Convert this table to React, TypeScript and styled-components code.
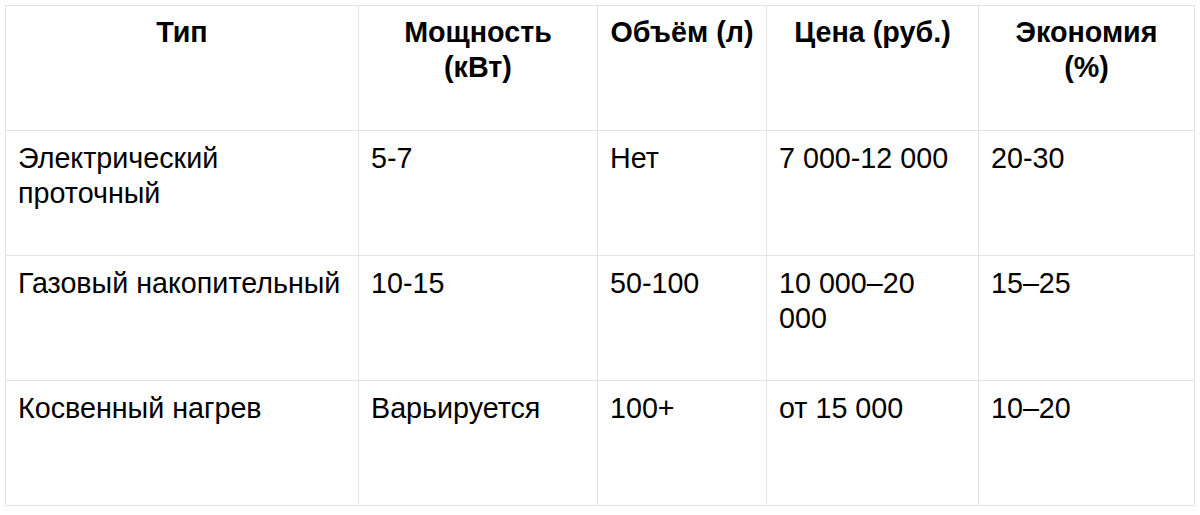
import React from 'react';
import styled, { createGlobalStyle } from 'styled-components';

const GlobalStyle = createGlobalStyle`
  body {
    margin: 0;
    background: #ffffff;
    font-family: "Liberation Sans", Arial, sans-serif;
    color: #000000;
  }
`;

const Page = styled.div`
  padding: 5px;
`;

const Table = styled.table`
  width: 1189px;
  border-collapse: collapse;
  table-layout: fixed;
  font-size: 28.7px;
  line-height: 35px;
`;

const Row = styled.tr`
  height: 125px;
`;

const HeadCell = styled.th`
  border: 1px solid #e3e3e8;
  padding: 9px 12px 7px;
  vertical-align: top;
  text-align: center;
  font-weight: 700;
`;

const Cell = styled.td`
  border: 1px solid #e3e3e8;
  padding: 10px 12px 7px;
  vertical-align: top;
  text-align: left;
  font-weight: 400;
`;

const columns = [
  { title: 'Тип', width: 353 },
  { title: 'Мощность (кВт)', width: 239 },
  { title: 'Объём (л)', width: 169 },
  { title: 'Цена (руб.)', width: 212 },
  { title: 'Экономия (%)', width: 216 },
];

const rows = [
  ['Электрический проточный', '5-7', 'Нет', '7 000-12 000', '20-30'],
  ['Газовый накопительный', '10-15', '50-100', '10 000–20 000', '15–25'],
  ['Косвенный нагрев', 'Варьируется', '100+', 'от 15 000', '10–20'],
];

const App: React.FC = () => {
  return (
    <Page>
      <GlobalStyle />
      <Table>
        <colgroup>
          {columns.map((c) => (
            <col key={c.title} style={{ width: c.width }} />
          ))}
        </colgroup>
        <thead>
          <Row>
            {columns.map((c) => (
              <HeadCell key={c.title}>{c.title}</HeadCell>
            ))}
          </Row>
        </thead>
        <tbody>
          {rows.map((r) => (
            <Row key={r[0]}>
              {r.map((v, i) => (
                <Cell key={i}>{v}</Cell>
              ))}
            </Row>
          ))}
        </tbody>
      </Table>
    </Page>
  );
};

export default App;
